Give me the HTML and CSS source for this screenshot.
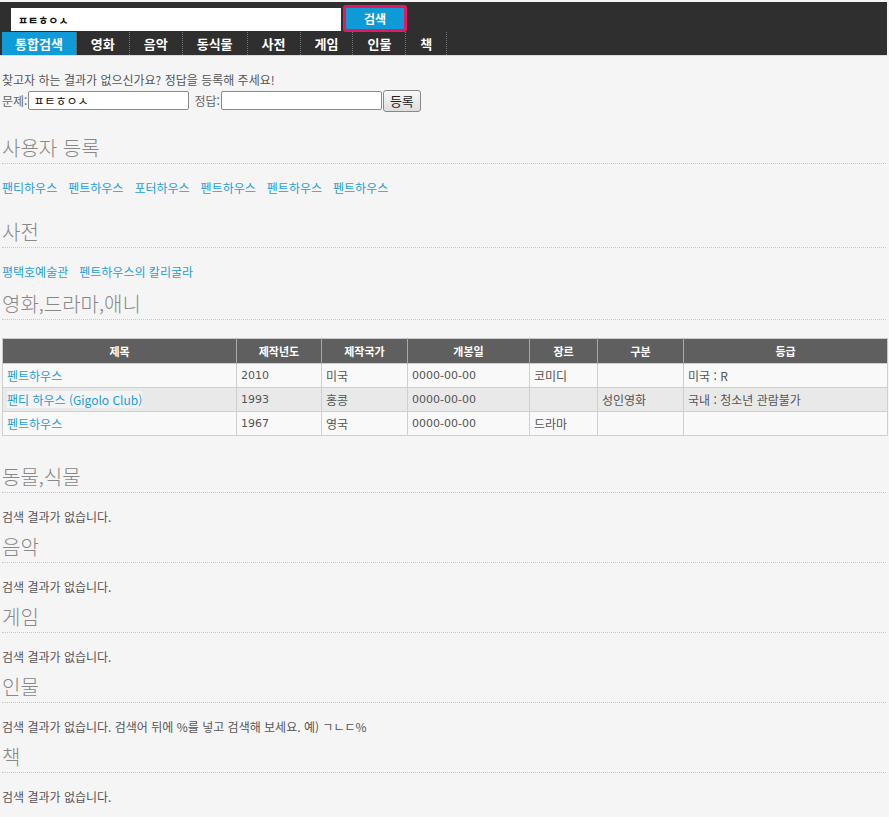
FILE: index.html
```html
<!DOCTYPE html>
<html lang="ko">
<head>
<meta charset="utf-8">
<title>통합검색</title>
<link rel="stylesheet" href="styles.css">
</head>
<body>
<header class="top">
  <div class="search-row">
    <input class="search-input" type="text" value="ㅍㅌㅎㅇㅅ">
    <button class="search-btn" type="button">검색</button>
  </div>
  <nav class="tabs">
    <a class="tab active" href="#">통합검색</a>
    <a class="tab" href="#">영화</a>
    <a class="tab" href="#">음악</a>
    <a class="tab" href="#">동식물</a>
    <a class="tab" href="#">사전</a>
    <a class="tab" href="#">게임</a>
    <a class="tab" href="#">인물</a>
    <a class="tab" href="#">책</a>
  </nav>
</header>

<main class="content">
  <div class="suggest">
    <p class="suggest-msg">찾고자 하는 결과가 없으신가요? 정답을 등록해 주세요!</p>
    <form class="suggest-form">
      <span class="lbl">문제:</span><input class="field" type="text" value="ㅍㅌㅎㅇㅅ">
      <span class="lbl lbl-gap">정답:</span><input class="field" type="text">
      <button class="reg-btn" type="button">등록</button>
    </form>
  </div>

  <section class="sec sec-user">
    <h2 class="sec-title">사용자 등록</h2>
    <div class="links">
      <a href="#">팬티하우스</a><a href="#">펜트하우스</a><a href="#">포터하우스</a><a href="#">펜트하우스</a><a href="#">펜트하우스</a><a href="#">펜트하우스</a>
    </div>
  </section>

  <section class="sec sec-dict">
    <h2 class="sec-title">사전</h2>
    <div class="links">
      <a href="#">평택호예술관</a><a href="#">펜트하우스의 칼리굴라</a>
    </div>
  </section>

  <section class="sec sec-movie">
    <h2 class="sec-title">영화,드라마,애니</h2>
    <table class="movies">
      <colgroup>
        <col class="c1"><col class="c2"><col class="c3"><col class="c4"><col class="c5"><col class="c6"><col class="c7">
      </colgroup>
      <thead>
        <tr><th>제목</th><th>제작년도</th><th>제작국가</th><th>개봉일</th><th>장르</th><th>구분</th><th>등급</th></tr>
      </thead>
      <tbody>
        <tr><td><a href="#">펜트하우스</a></td><td class="num">2010</td><td>미국</td><td class="num">0000-00-00</td><td>코미디</td><td></td><td>미국 : R</td></tr>
        <tr class="alt"><td><a class="hl" href="#">팬티 하우스 (Gigolo Club)</a></td><td class="num">1993</td><td>홍콩</td><td class="num">0000-00-00</td><td></td><td>성인영화</td><td>국내 : 청소년 관람불가</td></tr>
        <tr><td><a href="#">펜트하우스</a></td><td class="num">1967</td><td>영국</td><td class="num">0000-00-00</td><td>드라마</td><td></td><td></td></tr>
      </tbody>
    </table>
  </section>

  <section class="sec sec-animal">
    <h2 class="sec-title">동물,식물</h2>
    <p class="empty">검색 결과가 없습니다.</p>
  </section>

  <section class="sec">
    <h2 class="sec-title">음악</h2>
    <p class="empty">검색 결과가 없습니다.</p>
  </section>

  <section class="sec">
    <h2 class="sec-title">게임</h2>
    <p class="empty">검색 결과가 없습니다.</p>
  </section>

  <section class="sec">
    <h2 class="sec-title">인물</h2>
    <p class="empty">검색 결과가 없습니다. 검색어 뒤에 %를 넣고 검색해 보세요. 예) ㄱㄴㄷ%</p>
  </section>

  <section class="sec">
    <h2 class="sec-title">책</h2>
    <p class="empty">검색 결과가 없습니다.</p>
  </section>
</main>
</body>
</html>
```

FILE: styles.css
```css
* { box-sizing: border-box; }

html, body {
  margin: 0;
  padding: 0;
  background: #f5f5f5;
}

body {
  font-family: "Noto Sans CJK KR", "Liberation Sans", sans-serif;
  color: #555;
  font-size: 12px;
}

/* ---------- header ---------- */
.top {
  margin: 2px 2px 0 0;
  background: #2f2f2f;
  border-bottom: 1px solid #dcdcdc;
}

.search-row {
  display: flex;
  align-items: flex-end;
  gap: 2px;
  height: 30px;
  padding: 3px 0 0 11px;
}

.search-input {
  width: 330px;
  height: 23px;
  margin-bottom: 1px;
  border: 0;
  background: #fff;
  padding: 0 0 0 7px;
  font-family: "Noto Sans CJK KR", sans-serif;
  font-size: 11px;
  font-weight: 700;
  color: #111;
  outline: none;
}

.search-btn {
  width: 64px;
  height: 27px;
  border: 3px solid #e8185f;
  border-radius: 3px;
  background: #0d9ad7;
  color: #fff;
  font-family: "Noto Sans CJK KR", sans-serif;
  font-size: 12px;
  font-weight: 700;
  padding: 0;
}

.tabs {
  display: flex;
  height: 23px;
  padding-left: 2px;
}

.tab {
  display: flex;
  align-items: center;
  padding: 0 14px;
  border-right: 1px dotted #777;
  color: #fff;
  text-decoration: none;
  font-size: 13px;
  font-weight: 700;
  line-height: 23px;
}

.tab.active {
  padding: 0 13px;
  background: #0e9bd8;
  border-right-color: #555;
}

/* ---------- content ---------- */
.content {
  padding: 0 3px 20px 2px;
}

.suggest {
  padding-top: 16px;
}

.suggest-msg {
  margin: 0;
  line-height: 16px;
  font-size: 12px;
  color: #555;
}

.suggest-form {
  display: flex;
  align-items: center;
  height: 23px;
  margin: 1px 0 0;
}

.lbl {
  font-size: 12px;
  color: #666;
}

.lbl-gap { margin-left: 5px; }

.field {
  width: 161px;
  height: 19px;
  margin-left: 1px;
  border: 1px solid #8a8a8a;
  border-radius: 2px;
  background: #fff;
  padding: 0 0 0 4px;
  font-family: "Noto Sans CJK KR", sans-serif;
  font-size: 12px;
  color: #111;
}

.reg-btn {
  width: 38px;
  height: 22px;
  margin-left: 1px;
  border: 1px solid #888;
  border-radius: 3px;
  background: linear-gradient(#f8f8f8, #dedede);
  font-family: "Noto Sans CJK KR", sans-serif;
  font-size: 13px;
  color: #222;
  padding: 0;
}

.sec { margin-top: 10px; }

.sec-title {
  margin: 0;
  height: 28px;
  padding-bottom: 3px;
  border-bottom: 1px dotted #c8c8c8;
  font-size: 20px;
  line-height: 24px;
  font-weight: 300;
  color: #888;
}

.sec-user { margin-top: 24px; }
.sec-dict { margin-top: 24px; }
.sec-movie { margin-top: 12px; }
.sec-animal { margin-top: 29px; }

.links {
  display: flex;
  gap: 11px;
  margin-top: 16px;
  line-height: 16px;
}

.links a {
  font-size: 12px;
  color: #23a0db;
  text-decoration: none;
}

.empty {
  margin: 16px 0 0;
  line-height: 16px;
  font-size: 12px;
  color: #555;
}

/* ---------- table ---------- */
.movies {
  width: 885px;
  margin-top: 18px;
  border-collapse: collapse;
  table-layout: fixed;
  border: 1px solid #c8c8c8;
  font-family: "Noto Sans CJK KR", sans-serif;
  font-size: 12px;
}

.c1 { width: 234px; }
.c2 { width: 85px; }
.c3 { width: 86px; }
.c4 { width: 122px; }
.c5 { width: 68px; }
.c6 { width: 86px; }
.c7 { width: 204px; }

.movies th {
  height: 25px;
  background: #5f5f5f;
  color: #fff;
  font-weight: 700;
  font-size: 11px;
  border-left: 1px solid #a8a8a8;
  padding: 0;
}

.movies th:first-child { border-left: 0; }

.movies td {
  height: 24px;
  padding: 0 4px;
  border: 1px solid #cfcfcf;
  background: #f9f9f9;
  color: #555;
  white-space: nowrap;
}

.movies td.num {
  font-family: "DejaVu Sans", sans-serif;
  font-size: 11px;
}

.movies tr.alt td { background: #e9e9e9; }

.movies td a {
  color: #1f9ad6;
  text-decoration: none;
}

.movies td a.hl { background: #f4f4f4; }
```
